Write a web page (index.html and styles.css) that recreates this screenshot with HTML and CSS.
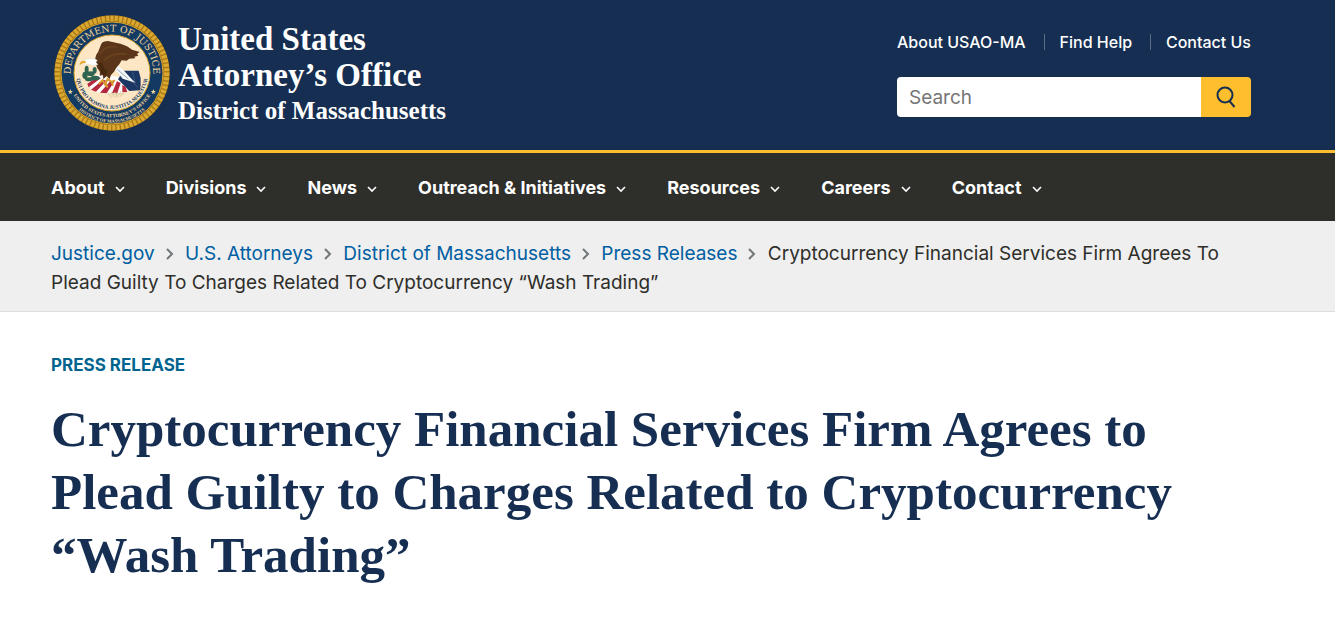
FILE: index.html
```html
<!DOCTYPE html>
<html lang="en">
<head>
    <meta charset="UTF-8">
    <meta name="viewport" content="width=device-width, initial-scale=1.0">
    <title>Cryptocurrency Financial Services Firm Agrees to Plead Guilty</title>
    <link rel="stylesheet" href="styles.css">
</head>
<body>

<!-- Shared icons -->
<svg class="icon-defs" aria-hidden="true">
    <symbol id="chevron-down" viewBox="0 0 10 7"><path d="M1 1 L5 5 L9 1" fill="none" stroke="currentColor" stroke-width="1.6"/></symbol>
    <symbol id="chevron-right" viewBox="0 0 8 12"><path d="M1 1 L6 6 L1 11" fill="none" stroke="currentColor" stroke-width="2"/></symbol>
</svg>

<header class="site-header">
    <div class="container header-inner">
        <a class="brand" href="#">
            <svg class="seal" viewBox="26 13 348 348" role="img" aria-label="Department of Justice seal">
                <defs>
                    <path id="arc-top" d="M200 311 A124 124 0 0 1 200 63 A124 124 0 0 1 200 311"/>
                    <path id="arc-motto" d="M200 79 A108 108 0 0 0 200 295 A108 108 0 0 0 200 79"/>
                    <path id="arc-office" d="M200 54 A133 133 0 0 0 200 320 A133 133 0 0 0 200 54"/>
                    <path id="arc-district" d="M200 38 A149 149 0 0 0 200 336 A149 149 0 0 0 200 38"/>
                </defs>
                <!-- rope border and rings -->
                <circle cx="200" cy="187" r="173" fill="#a87818"/>
                <circle cx="200" cy="187" r="164" fill="none" stroke="#dba92f" stroke-width="16" stroke-dasharray="9 4"/>
                <circle cx="200" cy="187" r="153" fill="#123a63" stroke="#d9a62e" stroke-width="3"/>
                <circle cx="200" cy="187" r="114" fill="#fde6c4" stroke="#d9a62e" stroke-width="3"/>
                <!-- shield -->
                <path d="M128 216 L160 190 L228 200 L250 243 Q180 257 138 238 Z" fill="#fff"/>
                <path d="M126 219 L157 199 L167 202 L130 230 Z M137 237 L173 207 L183 210 L152 243 Z M164 246 L195 211 L206 214 L184 248 Z M200 247 L215 212 L226 217 L216 248 Z M231 245 L231 222 L241 229 L246 244 Z" fill="#b5273c"/>
                <path d="M218 206 L234 180 L280 180 Q288 200 286 222 L284 239 L252 241 Z" fill="#1d3764"/>
                <path d="M262 184 L270 218 M251 205 L278 230" stroke="#39557e" stroke-width="3"/>
                <!-- tail -->
                <path d="M206 172 L219 165 L236 180 L258 204 L270 216 L232 204 Z" fill="#f4f6f8"/>
                <path d="M217 177 L249 205" stroke="#9aabbe" stroke-width="3"/>
                <!-- olive branch and arrows -->
                <g fill="#2f6550">
                    <ellipse cx="124" cy="177" rx="6" ry="12"/>
                    <ellipse cx="119" cy="194" rx="8" ry="11"/>
                    <ellipse cx="136" cy="189" rx="12" ry="7"/>
                    <ellipse cx="148" cy="179" rx="6" ry="10"/>
                    <ellipse cx="149" cy="202" rx="14" ry="7"/>
                    <ellipse cx="131" cy="206" rx="12" ry="6"/>
                </g>
                <path d="M186 244 L199 262 M197 244 L207 260 M208 244 L216 258 M236 244 L222 260 M228 241 L210 262 M192 250 L236 250" fill="none" stroke="#dccb9e" stroke-width="3"/>
                <!-- eagle -->
                <path d="M150 148 Q150 133 158 125 L168 99 Q173 91 188 91 L225 99 Q247 105 260 117 L283 124 L275 130 L279 135 L267 138 L270 143 L252 144 L244 150 L229 149 Q224 160 213 171 L206 183 L197 193 L193 205 L184 197 L174 205 L172 193 L163 195 L164 184 Q154 174 152 160 Z" fill="#5a3519"/>
                <path d="M163 129 Q183 101 216 110 M177 149 Q200 125 244 130" fill="none" stroke="#6f451f" stroke-width="4"/>
                <path d="M156 157 Q164 170 168 189 L180 195 L188 178 Q176 178 169 156 Z" fill="#46290f"/>
                <path d="M111 152 Q121 143 134 145 Q149 142 156 149 L152 155 L158 162 L143 164 L127 161 L114 163 Z" fill="#fff" stroke="#c5cdd2" stroke-width="1"/>
                <path d="M115 150 Q102 152 103 163 L112 158 L121 158 L121 151 Z" fill="#e6a932"/>
                <path d="M160 220 L172 209 L179 221 L187 205 L199 214 L209 209 M180 217 L187 231 M199 214 L203 225" fill="none" stroke="#d99a2b" stroke-width="6"/>
                <!-- inscriptions -->
                <text class="seal-name"><textPath href="#arc-top" startOffset="50%">DEPARTMENT OF JUSTICE</textPath></text>
                <text class="seal-motto"><textPath href="#arc-motto" startOffset="50%">QUI PRO DOMINA JUSTITIA SEQUITUR</textPath></text>
                <text class="seal-office"><textPath href="#arc-office" startOffset="50%">UNITED STATES ATTORNEY’S OFFICE</textPath></text>
                <text class="seal-district"><textPath href="#arc-district" startOffset="50%">DISTRICT OF MASSACHUSETTS</textPath></text>
                <path id="seal-star" d="M75 235 L77 241 L83 241 L78 245 L80 251 L75 247 L70 251 L72 245 L67 241 L73 241 Z" fill="#f5d79a"/>
                <use href="#seal-star" x="249"/>
            </svg>
            <span class="brand-text">
                <span class="brand-name">United States</span>
                <span class="brand-name">Attorney’s Office</span>
                <span class="brand-district">District of Massachusetts</span>
            </span>
        </a>

        <div class="header-tools">
            <ul class="top-links">
                <li><a href="#">About USAO-MA</a></li>
                <li><a href="#">Find Help</a></li>
                <li><a href="#">Contact Us</a></li>
            </ul>
            <form class="search" role="search">
                <input type="search" placeholder="Search" aria-label="Search">
                <button type="submit" aria-label="Search">
                    <svg viewBox="0 0 20 22" width="20" height="22" fill="none" stroke="#162e51" stroke-width="2">
                        <circle cx="9" cy="9" r="7.5"/>
                        <path d="M13.5 15 L18.5 21"/>
                    </svg>
                </button>
            </form>
        </div>
    </div>
</header>

<nav class="main-nav" aria-label="Main">
    <ul class="container">
        <li><button type="button">About <svg><use href="#chevron-down"/></svg></button></li>
        <li><button type="button">Divisions <svg><use href="#chevron-down"/></svg></button></li>
        <li><button type="button">News <svg><use href="#chevron-down"/></svg></button></li>
        <li><button type="button">Outreach &amp; Initiatives <svg><use href="#chevron-down"/></svg></button></li>
        <li><button type="button">Resources <svg><use href="#chevron-down"/></svg></button></li>
        <li><button type="button">Careers <svg><use href="#chevron-down"/></svg></button></li>
        <li><button type="button">Contact <svg><use href="#chevron-down"/></svg></button></li>
    </ul>
</nav>

<nav class="breadcrumb" aria-label="Breadcrumb">
    <ol class="container">
        <li><a href="#">Justice.gov</a><svg><use href="#chevron-right"/></svg></li>
        <li><a href="#">U.S. Attorneys</a><svg><use href="#chevron-right"/></svg></li>
        <li><a href="#">District of Massachusetts</a><svg><use href="#chevron-right"/></svg></li>
        <li><a href="#">Press Releases</a><svg><use href="#chevron-right"/></svg></li>
        <li>Cryptocurrency Financial Services Firm Agrees To Plead Guilty To Charges Related To Cryptocurrency “Wash Trading”</li>
    </ol>
</nav>

<main class="container">
    <p class="kicker">Press Release</p>
    <h1>Cryptocurrency Financial Services Firm Agrees to Plead Guilty to Charges Related to Cryptocurrency “Wash Trading”</h1>
</main>

</body>
</html>
```
FILE: styles.css
```css
* {
    box-sizing: border-box;
}
body {
    margin: 0;
    background-color: #fff;
    color: #2e2e2a;
    font-family: Inter, "Liberation Sans", sans-serif;
}
a {
    color: #005ea2;
    text-decoration: none;
}
a:hover {
    text-decoration: underline;
}
ul, ol {
    list-style: none;
    margin: 0;
    padding: 0;
}
.container {
    padding-left: 51px;
    padding-right: 84px;
}
.icon-defs {
    display: none;
}

/* Header */
.site-header {
    background-color: #162e51;
    border-bottom: 3px solid #ffbe2e;
}
.header-inner {
    display: flex;
    justify-content: space-between;
    padding-top: 15px;
    padding-bottom: 19px;
}
.brand {
    display: flex;
    align-items: center;
    gap: 8px;
    padding-left: 3px;
    color: #fff;
    font-family: "Liberation Serif", serif;
    font-weight: bold;
}
.seal {
    width: 116px;
    height: 116px;
}
.seal text {
    text-anchor: middle;
    fill: #f5d79a;
}
.seal .seal-name {
    font-family: "DejaVu Serif", serif;
    font-size: 28px;
    font-weight: normal;
}
.seal .seal-motto {
    font-size: 16px;
    fill: #123a63;
}
.seal .seal-office {
    font-size: 15px;
}
.seal .seal-district {
    font-size: 14px;
}
.brand-text {
    display: flex;
    flex-direction: column;
    padding-top: 4px;
}
.brand-name {
    font-size: 33px;
    line-height: 36px;
}
.brand-district {
    font-size: 25px;
    line-height: 36px;
}
.header-tools {
    width: 354px;
    padding-top: 16px;
}
.top-links {
    display: flex;
    justify-content: space-between;
    margin-bottom: 24px;
    font-size: 16px;
    font-weight: 500;
    line-height: 22px;
    white-space: nowrap;
}
.top-links li {
    display: flex;
    align-items: center;
}
.top-links li + li::before {
    content: "";
    height: 16px;
    margin-right: 15px;
    border-left: 1px solid #5c6d86;
}
.top-links a {
    color: #fff;
}
.search {
    display: flex;
    height: 40px;
}
.search input {
    flex: 1;
    min-width: 0;
    padding: 0 12px;
    border: none;
    border-radius: 4px 0 0 4px;
    font-family: inherit;
    font-size: 19px;
    appearance: none;
}
.search input::placeholder {
    color: #757575;
}
.search button {
    display: flex;
    align-items: center;
    justify-content: center;
    width: 50px;
    padding: 0;
    border: none;
    border-radius: 0 4px 4px 0;
    background-color: #ffbe2e;
    cursor: pointer;
}

/* Main navigation */
.main-nav {
    background-color: #2e2e2a;
}
.main-nav ul {
    display: flex;
    gap: 41px;
}
.main-nav button {
    display: flex;
    align-items: center;
    gap: 10px;
    padding: 23px 0 21px;
    border: none;
    background: none;
    color: #fff;
    font-family: inherit;
    font-size: 18px;
    font-weight: bold;
    line-height: 24px;
    white-space: nowrap;
    cursor: pointer;
}
.main-nav svg {
    width: 10px;
    height: 7px;
    margin-top: 3px;
}

/* Breadcrumb */
.breadcrumb {
    padding: 18px 0 14px;
    background-color: #efefef;
    border-bottom: 1px solid #dcdee0;
    font-size: 19px;
    line-height: 29px;
}
.breadcrumb li {
    display: inline;
}
.breadcrumb svg {
    width: 8px;
    height: 12px;
    margin: 0 6px 0 11px;
    color: #71767a;
}

/* Article */
.kicker {
    margin: 41px 0 0;
    color: #00648f;
    font-size: 17px;
    font-weight: bold;
    line-height: 24px;
    text-transform: uppercase;
}
h1 {
    margin: 21px 0 24px;
    color: #162e51;
    font-family: "Liberation Serif", serif;
    font-size: 51px;
    font-weight: bold;
    line-height: 63px;
}
```
